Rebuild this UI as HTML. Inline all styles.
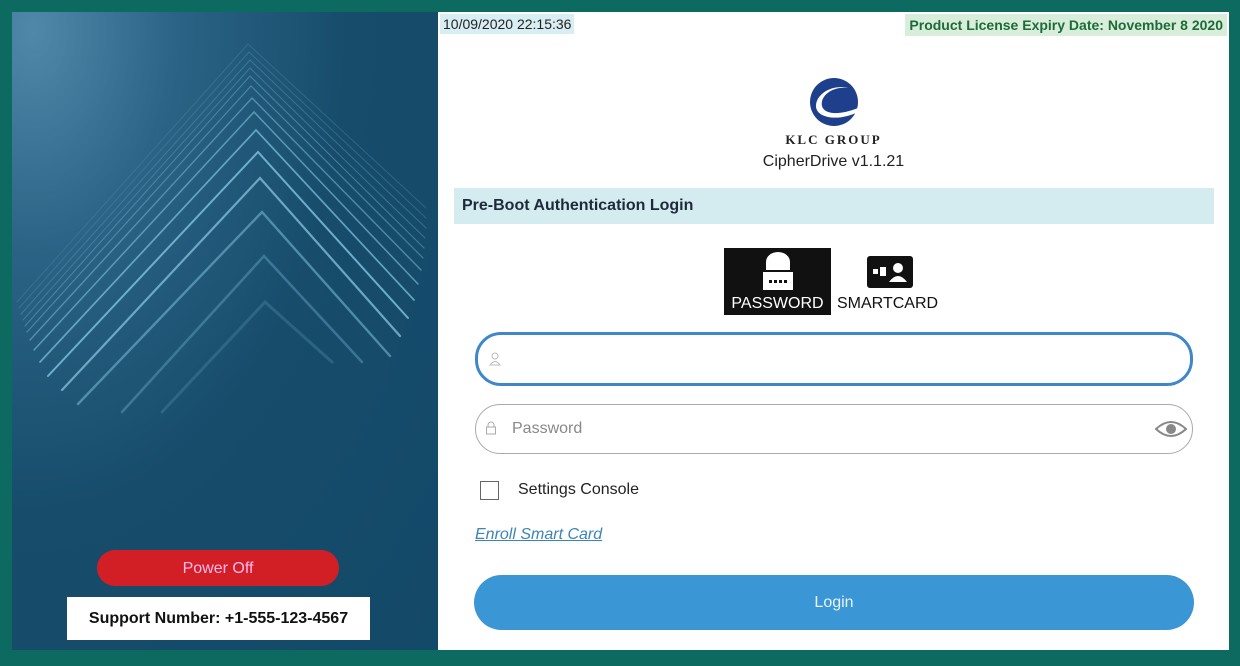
<!DOCTYPE html>
<html><head><meta charset="utf-8"><style>
body{margin:0;width:1240px;height:666px;background:#0c6a60;position:relative;overflow:hidden;font-family:"Liberation Sans",sans-serif}
.left{position:absolute;left:12px;top:12px;width:426px;height:638px;background:radial-gradient(ellipse at 5% 3%,#5088aa 0%,#2a6385 25%,#174c6b 55%,#134a68 100%)}
.right{position:absolute;left:438px;top:12px;width:791px;height:638px;background:#fff}
.pw{position:absolute;left:85px;top:538px;width:242px;height:36px;border-radius:18px;background:#d21f26;color:#fbe;font-size:16px;text-align:center;line-height:38px}
.sup{position:absolute;left:55px;top:585px;width:303px;height:43px;background:#fff;color:#111;font-size:16px;font-weight:bold;line-height:43px;text-align:center}
.abs{position:absolute}
</style></head><body>
<div class="left">
<svg width="426" height="638" style="position:absolute;left:0;top:0">
<g fill="none" stroke-linecap="round">
<path d="M5 290 L236 32 L414 196" stroke="#4c86a6" stroke-width="1" opacity=".45"/>
<path d="M7 296 L237 40 L414 206" stroke="#4c86a6" stroke-width="1" opacity=".5"/>
<path d="M9 302 L238 48 L414 216" stroke="#5290ae" stroke-width="1" opacity=".55"/>
<path d="M11 308 L238 56 L413 226" stroke="#5290ae" stroke-width="1" opacity=".6"/>
<path d="M13 314 L238 64 L412 236" stroke="#5a98b6" stroke-width="1.1" opacity=".65"/>
<path d="M15 320 L239 74 L411 246" stroke="#5a98b6" stroke-width="1.2" opacity=".7"/>
<path d="M18 328 L240 86 L409 258" stroke="#64a2c0" stroke-width="1.4" opacity=".75"/>
<path d="M22 338 L242 100 L406 272" stroke="#6aaac8" stroke-width="1.5" opacity=".8"/>
<path d="M28 350 L244 118 L402 288" stroke="#72b2d0" stroke-width="1.7" opacity=".85"/>
<path d="M36 364 L246 140 L396 306" stroke="#78b8d6" stroke-width="2" opacity=".9"/>
<path d="M50 378 L248 166 L388 324" stroke="#7ab6d2" stroke-width="2.2" opacity=".85"/>
<path d="M66 392 L250 200 L378 344" stroke="#6aa6c4" stroke-width="2.4" opacity=".7"/>
<path d="M110 400 L252 244 L350 350" stroke="#5a96b6" stroke-width="2.6" opacity=".55"/>
<path d="M150 400 L253 290 L320 350" stroke="#4e88a8" stroke-width="3" opacity=".4"/>
</g></svg>
<div class="pw">Power Off</div>
<div class="sup">Support Number: +1-555-123-4567</div>
</div>
<div class="right">
<div class="abs" style="left:2px;top:2px;background:#d8eef2;padding:2px 3px;font-size:14px;color:#222">10/09/2020 22:15:36</div>
<div class="abs" style="right:2px;top:2px;background:#d8eedb;padding:3px 4px;font-size:14px;font-weight:bold;color:#1d6b3a">Product License Expiry Date: November 8 2020</div>
<svg class="abs" style="left:370px;top:66px" width="52" height="48" viewBox="0 0 52 48"><circle cx="26" cy="24" r="24" fill="#1d3f8c"/><path d="M40 10 C24 8 12 18 14 28 C16 36 30 38 50 30 L50 34 C30 44 8 40 8 28 C8 16 24 6 40 10Z" fill="#fff"/></svg>
<div class="abs" style="left:0;width:791px;top:120px;text-align:center;font-family:'Liberation Serif',serif;font-size:13px;letter-spacing:2px;font-weight:bold;color:#222">KLC GROUP</div>
<div class="abs" style="left:0;width:791px;top:141px;text-align:center;font-size:16px;color:#222">CipherDrive v1.1.21</div>
<div class="abs" style="left:16px;top:176px;width:760px;height:36px;background:#d4ecf0;line-height:36px;font-size:16px;font-weight:bold;color:#1e2a3a;text-indent:8px">Pre-Boot Authentication Login</div>
<div class="abs" style="left:286px;top:236px;width:107px;height:67px;background:#111"></div>
<svg class="abs" style="left:323px;top:240px" width="34" height="40"><path d="M5 18 V10 A12 10 0 0 1 29 10 V18Z" fill="#fff"/><rect x="2" y="20" width="30" height="18" fill="#fff"/><g fill="#111"><rect x="8" y="28" width="3" height="3"/><rect x="13" y="28" width="3" height="3"/><rect x="18" y="28" width="3" height="3"/><rect x="23" y="28" width="3" height="3"/></g></svg>
<div class="abs" style="left:286px;top:283px;width:107px;text-align:center;color:#fff;font-size:16px">PASSWORD</div>
<svg class="abs" style="left:429px;top:244px" width="46" height="32"><rect width="46" height="32" rx="3" fill="#111"/><rect x="6" y="13" width="5" height="5" fill="#fff"/><rect x="13" y="11" width="6" height="9" fill="#fff"/><circle cx="31" cy="12" r="5" fill="#fff"/><path d="M22 26 Q31 14 40 26Z" fill="#fff"/></svg>
<div class="abs" style="left:399px;top:283px;font-size:16px;color:#111">SMARTCARD</div>
<div class="abs" style="left:37px;top:320px;width:712px;height:48px;border:3px solid #3f87c8;border-radius:26px"></div>
<svg class="abs" style="left:51px;top:340px" width="12" height="14"><circle cx="6" cy="4" r="3" fill="none" stroke="#bbb"/><path d="M1 13 Q6 6 11 13Z" fill="none" stroke="#bbb"/></svg>
<div class="abs" style="left:37px;top:392px;width:716px;height:48px;border:1.5px solid #aaa;border-radius:26px"></div>
<svg class="abs" style="left:47px;top:409px" width="12" height="14"><path d="M3 6 V4 A3 3 0 0 1 9 4 V6" fill="none" stroke="#aaa"/><rect x="1.5" y="6" width="9" height="7" fill="none" stroke="#aaa"/></svg>
<div class="abs" style="left:74px;top:408px;font-size:16px;color:#888">Password</div>
<svg class="abs" style="left:716px;top:406px" width="34" height="22"><path d="M2 11 Q17 -3 32 11 Q17 25 2 11Z" fill="none" stroke="#888" stroke-width="2"/><circle cx="17" cy="11" r="5" fill="#888"/></svg>
<div class="abs" style="left:42px;top:469px;width:17px;height:17px;border:1.5px solid #666"></div>
<div class="abs" style="left:80px;top:469px;font-size:16px;color:#222">Settings Console</div>
<div class="abs" style="left:37px;top:514px;font-size:16px;color:#3b84b8;font-style:italic;text-decoration:underline">Enroll Smart Card</div>
<div class="abs" style="left:36px;top:563px;width:720px;height:55px;border-radius:28px;background:#3b96d6;color:#e8f3fb;font-size:16px;text-align:center;line-height:55px">Login</div>
</div>
</body></html>
